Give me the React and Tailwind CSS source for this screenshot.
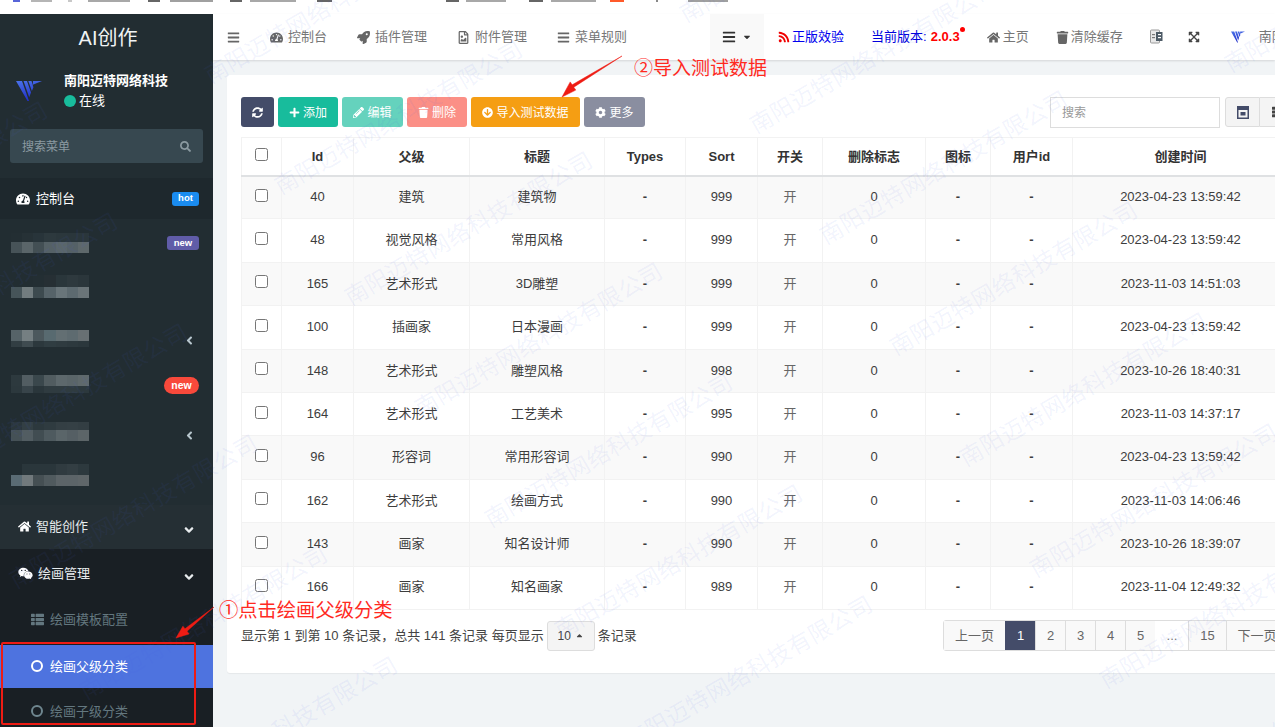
import React from "react";
import {
  FaTachometerAlt, FaRocket, FaRegFileImage, FaBars, FaRss, FaHome, FaTrash, FaExpandArrowsAlt,
  FaSyncAlt, FaPlus, FaPencilAlt, FaArrowCircleDown, FaCog, FaThList, FaWeixin, FaSearch,
  FaAngleDown, FaAngleLeft, FaCaretDown, FaCaretUp, FaTh,
} from "react-icons/fa";

const bookmarks = [
  [13, 7, "#5865d8"], [11, 21, "#b5b5b5"], [16, 4, "#c8c8c8"], [16, 42, "#a8a8a8"], [18, 12, "#666666"],
  [10, 43, "#a0a0a0"], [17, 12, "#666666"], [8, 46, "#a8a8a8"], [21, 15, "#666666"], [50, 0, "#fff"],
  [64, 13, "#666666"], [7, 40, "#a8a8a8"], [23, 14, "#666666"], [8, 45, "#a8a8a8"], [14, 14, "#ff5a2a"],
  [32, 2, "#888888"], [30, 40, "#a0a0a0"],
];

const rows = [
  [40, "建筑", "建筑物", 999, "2023-04-23 13:59:42"],
  [48, "视觉风格", "常用风格", 999, "2023-04-23 13:59:42"],
  [165, "艺术形式", "3D雕塑", 999, "2023-11-03 14:51:03"],
  [100, "插画家", "日本漫画", 999, "2023-04-23 13:59:42"],
  [148, "艺术形式", "雕塑风格", 998, "2023-10-26 18:40:31"],
  [164, "艺术形式", "工艺美术", 995, "2023-11-03 14:37:17"],
  [96, "形容词", "常用形容词", 990, "2023-04-23 13:59:42"],
  [162, "艺术形式", "绘画方式", 990, "2023-11-03 14:06:46"],
  [143, "画家", "知名设计师", 990, "2023-10-26 18:39:07"],
  [166, "画家", "知名画家", 989, "2023-11-04 12:49:32"],
];

const colWidths = [40, 72, 116, 135, 81, 72, 65, 103, 65, 82, 216];
const heads = ["Id", "父级", "标题", "Types", "Sort", "开关", "删除标志", "图标", "用户id", "创建时间"];

const mosaics = [
  { shift: 0, grid: [["#232e33", "#263136", "#28343a", "#2d393e", "#2b373c", "#2a363b", "#2a363b"], ["#475358", "#5a6569", "#434f54", "#556166", "#5a666a", "#556166", "#5e686b"]], hs: [9, 11] },
  { shift: -8, grid: [["#222d32", "#222d32", "#232e33", "#262f34", "#2a363b", "#2e393e", "#2b363b"], ["#465459", "#727c7f", "#3d4a4f", "#566369", "#69757a", "#5d6a70", "#6a7478"]], hs: [12, 11] },
  { shift: 0, grid: [["#566368", "#757f82", "#4c585d", "#586a70", "#636f73", "#5e6b70", "#687073"], ["#323e43", "#3f4b50", "#2c383d", "#303d42", "#2f3b40", "#2d393e", "#2b373c"]], hs: [11, 6] },
  { shift: -4, grid: [["#2d393e", "#525d62", "#3a474c", "#515c60", "#5d686c", "#5a6569", "#5f696c"], ["#2c383d", "#38444a", "#2a363b", "#2f3b40", "#2f3b40", "#2f3b40", "#2c383d"]], hs: [11, 7] },
  { shift: -4, grid: [["#2a363b", "#333f44", "#2c383d", "#2f3b40", "#343f44", "#354045", "#333e43"], ["#455156", "#525d62", "#414d52", "#4e5a5f", "#5a6569", "#555f64", "#5c6568"]], hs: [8, 11] },
  { shift: -12, grid: [["#222d32", "#2a363b", "#2a363b", "#2a363b", "#303b40", "#333e43", "#2d393e"], ["#5a6b74", "#71797c", "#454f53", "#505a5e", "#5c6468", "#5c6468", "#5f6669"]], hs: [11, 11] },
];

const sideRows = [
  { badge: <span className="flex h-[14px] w-[32px] items-center justify-center rounded-[3px] bg-[#605ca8] text-[9.5px] font-bold text-white">new</span> },
  {},
  { chevron: true },
  { badge: <span className="flex h-[17px] w-[35px] items-center justify-center rounded-full bg-[#f8493b] text-[10.5px] font-bold text-white">new</span> },
  { chevron: true },
  {},
];

const watermarks = [];
for (let i = -2; i < 3; i++) {
  for (let j = -3; j < 7; j++) {
    const x = 275 + 545 * i + 70 * j;
    const y = 175 + 50 * i + 111 * j;
    if (x > -300 && x < 1275 && y > -20 && y < 800) watermarks.push([x, y]);
  }
}

function Logo({ className }) {
  return (
    <svg viewBox="0 0 26 22" className={className}>
      <defs>
        <linearGradient id="lg" x1="0" y1="0" x2="0.3" y2="1">
          <stop offset="0" stopColor="#4a72ea" />
          <stop offset="1" stopColor="#2230c8" />
        </linearGradient>
      </defs>
      <path d="M0 1h6l7 20h-1.5zM7.5 1h3.5l4 11.5-1.8 4.8zM12.3 1h3.2l1.9 6.200-1.500 3.800zM17 1h9l-9.200 3.800z" fill="url(#lg)" />
    </svg>
  );
}

function TranslateIcon() {
  return (
    <svg width="13" height="16" viewBox="0 0 13 16">
      <rect x="0.5" y="1" width="9" height="13" rx="1" fill="#e8e8e8" stroke="#9a9a9a" />
      <rect x="6" y="3" width="6.500" height="9" fill="#4d5b66" />
      <rect x="8" y="5" width="3" height="1.200" fill="#fff" />
      <rect x="8" y="8" width="3" height="1.200" fill="#fff" />
      <rect x="2" y="5" width="3" height="1.200" fill="#777" />
      <rect x="2" y="8" width="3" height="1.200" fill="#777" />
    </svg>
  );
}

function NavLink({ icon, label, className = "" }) {
  return (
    <div className={`flex h-full items-center px-[15px] text-[13px] text-[#777777] ${className}`}>
      <span className="flex w-[13px] justify-center text-[13px] text-[#666666]">{icon}</span>
      <span className="whitespace-nowrap">{label}</span>
    </div>
  );
}

function ToolButton({ color, icon, label, w }) {
  return (
    <div className={`flex h-[30px] items-center justify-center gap-[3px] rounded-[3px] text-[12px] text-white ${color} ${w}`}>
      <span className="text-[11px]">{icon}</span>
      {label && <span className="mt-[1px] whitespace-nowrap">{label}</span>}
    </div>
  );
}

function Mosaic({ m }) {
  return (
    <div className="ml-[11px] flex flex-col" style={{ marginTop: m.shift }}>
      {m.grid.map((row, r) => (
        <div key={r} className="flex" style={{ height: m.hs[r] }}>
          {row.map((c, i) => (
            <span key={i} className="w-[11.140px]" style={{ backgroundColor: c }} />
          ))}
        </div>
      ))}
    </div>
  );
}

function Sidebar() {
  return (
    <aside className="flex w-[213px] shrink-0 flex-col overflow-hidden bg-[#222d32] text-[13px] text-white [&>*]:shrink-0">
      <div className="flex h-[46px] items-center justify-center pl-[3px] pt-[1px] text-[20px] text-[#f0f3f4]">AI创作</div>
      <div className="flex h-[69px] items-center pb-[8px] pl-[16px]">
        <Logo className="h-[22px] w-[26px]" />
        <div className="ml-[22px]">
          <div className="whitespace-nowrap text-[13px] font-bold leading-[20px]">南阳迈特网络科技</div>
          <div className="flex items-center gap-[3px] leading-[20px]">
            <span className="h-[12px] w-[12px] rounded-full bg-[#18bc9c]" />
            <span>在线</span>
          </div>
        </div>
      </div>
      <div className="mx-[10px] flex h-[34px] items-center justify-between rounded-[3px] bg-[#374850] pl-[12px] pr-[12px] pt-[1px] text-[12px] text-[#8b9aa1]">
        <span>搜索菜单</span>
        <FaSearch className="text-[11px]" />
      </div>
      <div className="mt-[15px] flex h-[41px] items-center justify-between bg-[#1e282d] pl-[16px] pr-[14px]">
        <span className="flex items-center gap-[6px]">
          <FaTachometerAlt className="text-[14px]" />
          <span>控制台</span>
        </span>
        <span className="flex h-[14px] w-[27px] items-center justify-center rounded-[3px] bg-[#1a8cf0] text-[9.500px] font-bold">hot</span>
      </div>
      {sideRows.map((r, i) => (
        <div key={i} className="flex h-[47.670px] items-center justify-between pr-[14px]">
          <Mosaic m={mosaics[i]} />
          {r.badge}
          {r.chevron && <FaAngleLeft className="mr-[3px] mt-[5px] text-[13px] text-[#b8c7ce]" />}
        </div>
      ))}
      <div className="flex h-[44px] items-center justify-between bg-[#252f34] pl-[18px] pr-[17px] text-[#e8ecee]">
        <span className="flex items-center gap-[5px]">
          <FaHome className="text-[13px] text-white" />
          <span>智能创作</span>
        </span>
        <FaAngleDown className="mt-[7px] text-[14px]" />
      </div>
      <div className="flex h-[178px] flex-col bg-[#191f24] [&>*]:shrink-0">
        <div className="flex h-[46px] items-center justify-between pl-[18px] pr-[17px] pt-[3px] text-[#e8ecee]">
          <span className="flex items-center gap-[5px]">
            <FaWeixin className="text-[15px] text-white" />
            <span>绘画管理</span>
          </span>
          <FaAngleDown className="mt-[7px] text-[14px]" />
        </div>
        <div className="flex h-[50px] items-center gap-[6px] pl-[31px] text-[#63777f]">
          <FaThList className="text-[13px]" />
          <span>绘画模板配置</span>
        </div>
        <div className="flex h-[43px] items-center gap-[7px] bg-[#4e73df] pl-[31px] text-white">
          <span className="h-[12px] w-[12px] rounded-full border-[2px] border-white" />
          <span>绘画父级分类</span>
        </div>
        <div className="flex h-[46px] items-center gap-[7px] pl-[31px] pt-[1px] text-[#63777f]">
          <span className="h-[12px] w-[12px] rounded-full border-[2px] border-[#6f8790]" />
          <span>绘画子级分类</span>
        </div>
      </div>
    </aside>
  );
}

function TopNav() {
  return (
    <header className="flex h-[46px] shrink-0 items-center bg-white shadow-[0_1px_2px_rgba(0,0,0,0.12)] [&>*]:shrink-0">
      <div className="mr-[8px] flex w-[34px] justify-end pr-[7px] text-[13px] text-[#666666]"><FaBars /></div>
      <NavLink icon={<FaTachometerAlt />} label={<span className="ml-[5px]">控制台</span>} />
      <NavLink icon={<FaRocket />} label={<span className="ml-[5px]">插件管理</span>} />
      <NavLink icon={<FaRegFileImage />} label={<span className="ml-[5px]">附件管理</span>} />
      <NavLink icon={<FaBars />} label={<span className="ml-[5px]">菜单规则</span>} />
      <div className="ml-[68px] flex h-full w-[54px] items-center justify-center gap-[6px] bg-[#f9f9f9] text-[#333333]">
        <FaBars className="text-[14px]" />
        <FaCaretDown className="text-[10px]" />
      </div>
      <div className="flex items-center gap-[2px] pl-[14px] text-[13px] text-[#0000ee]">
        <FaRss className="text-[12px] text-[#f00000]" />
        <span className="whitespace-nowrap">正版效验</span>
      </div>
      <div className="relative ml-[27px] flex items-center whitespace-nowrap text-[13px]">
        <span className="text-[#0000dd]">当前版本:</span>
        <span className="ml-[4px] font-bold text-[#ff0000]">2.0.3</span>
        <span className="absolute -right-[5px] top-[0px] h-[5px] w-[5px] rounded-full bg-[#ff0000]" />
      </div>
      <NavLink icon={<FaHome />} label={<span className="ml-[3px]">主页</span>} className="ml-[12px]" />
      <NavLink icon={<FaTrash />} label={<span className="ml-[2px]">清除缓存</span>} className="!px-[12px]" />
      <div className="ml-[15px] flex h-full items-center"><TranslateIcon /></div>
      <div className="ml-[25px] flex h-full items-center text-[12px] text-[#444444]"><FaExpandArrowsAlt /></div>
      <Logo className="ml-[31px] h-[12px] w-[14px]" />
      <span className="ml-[14px] whitespace-nowrap text-[13px] text-[#777777]">南阳迈特网络科技</span>
    </header>
  );
}

function Toolbar() {
  return (
    <div className="flex items-start justify-between">
      <div className="flex gap-[4px]">
        <ToolButton color="bg-[#444c69]" icon={<FaSyncAlt />} w="w-[33px]" />
        <ToolButton color="bg-[#18bc9c]" icon={<FaPlus />} label="添加" w="w-[60px]" />
        <ToolButton color="bg-[#65d2bd]" icon={<FaPencilAlt />} label="编辑" w="w-[61px]" />
        <ToolButton color="bg-[#fb8f86]" icon={<FaTrash />} label="删除" w="w-[60px]" />
        <ToolButton color="bg-[#f59e13]" icon={<FaArrowCircleDown />} label="导入测试数据" w="w-[109px]" />
        <ToolButton color="bg-[#8a8ea0]" icon={<FaCog />} label="更多" w="w-[61px]" />
      </div>
      <div className="flex">
        <div className="flex h-[31px] w-[170px] items-center border border-[#dddddd] pl-[11px] text-[12px] text-[#999999]">搜索</div>
        <div className="ml-[5px] flex h-[30px] w-[35px] items-center justify-center rounded-l-[3px] border border-[#dddddd] bg-[#f4f4f4]">
          <svg width="12" height="13" viewBox="0 0 12 13">
            <rect x="0.750" y="0.750" width="10.500" height="11.500" fill="none" stroke="#444c69" strokeWidth="1.500" />
            <rect x="1" y="1" width="10" height="3" fill="#444c69" />
            <rect x="3.500" y="6" width="5" height="3.500" fill="#444c69" />
          </svg>
        </div>
        <div className="flex h-[30px] w-[28px] items-center justify-center border-y border-r border-[#dddddd] bg-[#f4f4f4] pl-[8px] text-[12px] text-[#444444]">
          <FaTh />
        </div>
      </div>
    </div>
  );
}

function DataTable() {
  return (
    <table className="mt-[9px] w-[1047px] table-fixed border-collapse text-[13px] text-[#3d3d3d]">
      <colgroup>
        {colWidths.map((w, i) => <col key={i} style={{ width: w }} />)}
      </colgroup>
      <thead>
        <tr className="h-[38px] border-b-2 border-[#dfe1e3]">
          <th className="border-x border-t border-[#f2f2f2] font-normal">
            <input type="checkbox" className="mx-auto mb-[4px] block h-[13px] w-[13px]" readOnly />
          </th>
          {heads.map((h) => (
            <th key={h} className="border-x border-t border-[#f2f2f2] font-bold text-[#333333]">{h}</th>
          ))}
        </tr>
      </thead>
      <tbody>
        {rows.map((r, i) => (
          <tr key={r[0]} className={`h-[43.400px] ${i % 2 === 0 ? "bg-[#f9f9f9]" : "bg-white"} [&>td]:border [&>td]:border-[#f2f2f2] [&>td]:pb-[1px] [&>td]:text-center`}>
            <td>
              <input type="checkbox" className="mx-auto mb-[3px] block h-[13px] w-[13px]" readOnly />
            </td>
            <td>{r[0]}</td>
            <td>{r[1]}</td>
            <td>{r[2]}</td>
            <td className="font-bold">-</td>
            <td>{r[3]}</td>
            <td className="text-[#666666]">开</td>
            <td>0</td>
            <td className="font-bold">-</td>
            <td className="font-bold">-</td>
            <td>{r[4]}</td>
          </tr>
        ))}
      </tbody>
    </table>
  );
}

function Pager() {
  const cells = [["上一页", 61], ["1", 30, true], ["2", 30], ["3", 30], ["4", 30], ["5", 30], ["...", 33, false, true], ["15", 38], ["下一页", 61]];
  return (
    <div className="mt-[10px] flex items-start justify-between text-[13px] text-[#444444]">
      <div className="flex items-center">
        <span className="whitespace-nowrap">显示第 1 到第 10 条记录，总共 141 条记录 每页显示</span>
        <div className="ml-[3px] mt-px flex h-[30px] w-[48px] items-center justify-center gap-[4px] rounded-[3px] border border-[#dddddd] bg-[#f4f4f4] text-[12px]">
          <span>10</span>
          <FaCaretUp className="text-[9px]" />
        </div>
        <span className="ml-[3px] whitespace-nowrap">条记录</span>
      </div>
      <div className="flex h-[31px] rounded-[3px] border border-[#dddddd]">
        {cells.map(([t, w, active, plain], i) => (
          <div
            key={i}
            style={{ width: w }}
            className={`flex shrink-0 items-center justify-center border-l first:border-l-0 ${
              active ? "border-[#444c69] bg-[#444c69] text-white" : plain ? "border-transparent bg-white text-[#777777]" : "border-[#dddddd] bg-[#f9f9f9] text-[#666666]"
            }`}
          >
            {t}
          </div>
        ))}
      </div>
    </div>
  );
}

export default function App() {
  return (
    <div className="relative flex h-[727px] w-[1275px] flex-col overflow-hidden bg-white font-['Liberation_Sans','Noto_Sans_CJK_SC',sans-serif]">
      <div className="flex h-[14px] shrink-0 items-start overflow-hidden bg-white">
        {bookmarks.map(([gap, w, c], i) => (
          <span key={i} className="h-[2px] shrink-0" style={{ marginLeft: gap, width: w, backgroundColor: c }} />
        ))}
      </div>
      <div className="flex min-h-0 flex-1">
        <Sidebar />
        <main className="flex min-w-0 flex-1 flex-col bg-[#f1f4f6]">
          <TopNav />
          <div className="ml-[14px] mt-[15px] h-[598px] w-[1075px] shrink-0 rounded-[3px] bg-white px-[14px] pt-[22px] shadow-[0_1px_1px_rgba(0,0,0,0.05)]">
            <Toolbar />
            <DataTable />
            <Pager />
          </div>
        </main>
      </div>

      {watermarks.map(([x, y], i) => (
        <span
          key={i}
          className="pointer-events-none absolute origin-left -rotate-[30deg] whitespace-nowrap text-[23px] leading-none tracking-[0.5px] text-[#4a5fe8]/[0.08]"
          style={{ left: x + 2, top: y + 2 }}
        >
          南阳迈特网络科技有限公司
        </span>
      ))}

      <span className="absolute left-[634px] top-[55px] mt-[2px] whitespace-nowrap text-[19px] leading-[24px] text-[#ff2a1f]">②导入测试数据</span>
      <span className="absolute left-[219px] top-[597px] mt-[2px] whitespace-nowrap text-[19.300px] leading-[24px] text-[#ff2a1f]">①点击绘画父级分类</span>
      <svg className="pointer-events-none absolute left-0 top-0" width="1275" height="727">
        <path d="M622 56 L572.200 84.800 L570.200 81.900 L562 97 L575.800 90.100 L573.800 87.200 Z" fill="#ee1c14" stroke="#ee1c14" strokeWidth="0.5" />
        <path d="M214 607 L185 628.800 L182.900 626.200 L176 638 L189.100 633.900 L187 631.200 Z" fill="#ee1c14" stroke="#ee1c14" strokeWidth="0.5" />
      </svg>
      <div className="pointer-events-none absolute left-[1px] top-[642px] h-[83px] w-[195px] rounded-[2px] border-[2px] border-[#ee1c14]" />
    </div>
  );
}
